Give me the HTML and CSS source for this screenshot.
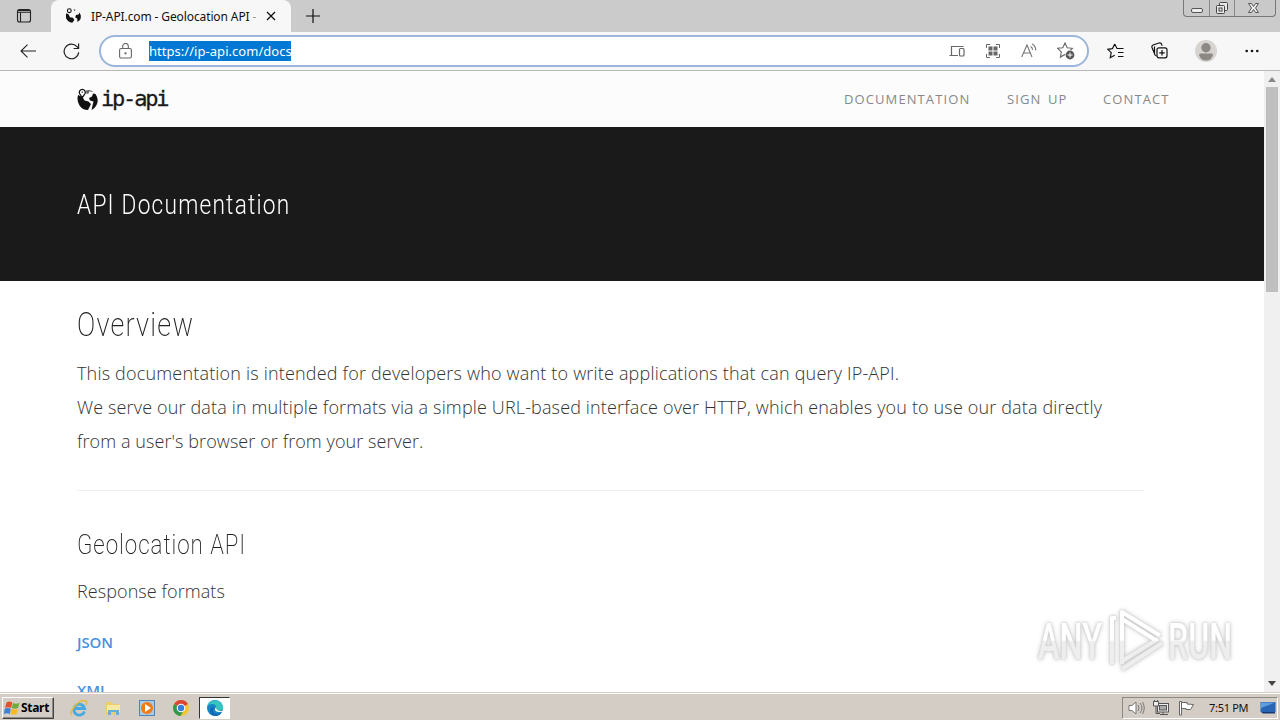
FILE: index.html
```html
<!DOCTYPE html>
<html lang="en">
<head>
<meta charset="utf-8">
<title>IP-API.com - Geolocation API</title>
<link rel="stylesheet" href="styles.css">
</head>
<body>
<div class="tabs">
  <svg class="workspaces" viewBox="0 0 16 16" fill="none" stroke="#222" stroke-width="1.1"><rect x="1.500" y="1.500" width="13" height="12.500" rx="2"/><path d="M2 2.500h12M1.500 4.300h13M4.500 4.500v9.500"/></svg>
  <div class="tab">
    <svg class="favicon" viewBox="0 0 17 16" fill="#111"><circle cx="4.300" cy="2.700" r="1.900" fill="none" stroke="#111" stroke-width="1.100"/><path d="M1 5.200l2.500 1L5 9.300l3 .5 1.300 2.200-2 2.800Q2.500 14 1 10zM8.500 1.500l2 .3-1 1.200zM11 7l2.500-.5 1-2 1.300 3q.5 4.500-3.300 6.500l-.3-3.500-2-1z"/></svg>
    <span class="tab-title">IP-API.com - Geolocation API <span class="fade">-</span></span>
    <svg class="close" viewBox="0 0 10 10"><path d="M1 1l8 8M9 1l-8 8" stroke="#111" stroke-width="1.300"/></svg>
  </div>
  <svg class="plus" viewBox="0 0 14 14"><path d="M7 0v14M0 7h14" stroke="#111" stroke-width="1.200"/></svg>
  <div class="window">
    <svg width="25" height="16"><rect x="7.500" y="8.500" width="11" height="4" rx="1.500" fill="#eee" stroke="#555"/></svg>
    <svg width="25" height="16" fill="#e8e8e8" stroke="#444"><rect x="9.500" y="2.500" width="8" height="8" rx="1"/><rect x="6.500" y="5.500" width="8" height="8" rx="1"/><rect x="9" y="8" width="3" height="3"/></svg>
    <svg width="41" height="16"><path d="M13.500 3.500h3l2 3 2-3h3l-3 4.500 3 4.500h-3l-2-3-2 3h-3l3-4.500z" fill="#eee" stroke="#555"/></svg>
  </div>
</div>
<div class="toolbar">
  <svg class="back" viewBox="0 0 16 14" fill="none" stroke="#222" stroke-width="1.100"><path d="M16 7H1M7.500 .6L1 7l6.500 6.400"/></svg>
  <svg class="reload" viewBox="0 0 17 17" fill="none" stroke="#222" stroke-width="1.200"><path d="M15.700 9.200a7.300 7.300 0 1 1-1.700-5.500l1.500 1.700M15.600 .5v5h-5"/></svg>
  <div class="address">
    <svg class="lock" viewBox="0 0 13 16" fill="none" stroke="#666" stroke-width="1.100"><rect x=".6" y="5.500" width="11.800" height="9.500" rx="1.500"/><path d="M3.700 5.500V3.300a2.800 2.800 0 0 1 5.600 0v2.200"/><circle cx="6.500" cy="10.300" r=".6" fill="#555"/></svg>
    <span class="url">https://ip-api.com/docs</span>
    <div class="actions">
      <svg width="16" height="16" viewBox="0 0 16 16" fill="none" stroke="#666" stroke-width="1.200"><path d="M2.500 12V3.500h12M.5 12.500h8.500"/><rect x="10.500" y="5.500" width="4.500" height="7.500" rx="1"/></svg>
      <svg width="16" height="16" viewBox="0 0 16 16" fill="#666" stroke="#666"><path d="M1.500 5V1.500H5M11 1.500h3.500V5M14.500 11v3.500H11M5 14.500H1.500V11" fill="none"/><rect x="4" y="4" width="3" height="3"/><rect x="9" y="4" width="3" height="3"/><rect x="4" y="9" width="3" height="3"/><rect x="9" y="9" width="3" height="3"/></svg>
      <svg width="16" height="16" viewBox="0 0 16 16" fill="none" stroke="#777" stroke-width="1.100"><path d="M.7 14L6 2l5 12M2.600 10h6.700M9.500 3.500q2.200 1 2 3.500M11 1q4 2 3.700 6.500"/></svg>
      <svg width="18" height="18" viewBox="0 0 18 18"><path d="M8 1l2.200 4.700 5.200.6-3.900 3.600 1 5L8 12.500l-4.600 2.600.9-5.200L.6 6.300l5.200-.6z" fill="none" stroke="#666" stroke-width="1.100"/><circle cx="13" cy="13" r="5" fill="#fff"/><circle cx="13" cy="13" r="4.400" fill="#555"/><path d="M13 10.500v5M10.500 13h5" stroke="#fff"/></svg>
    </div>
  </div>
  <div class="tools">
    <svg width="18" height="16" viewBox="0 0 18 16" fill="none" stroke="#111" stroke-width="1.200"><path d="M7.700 1L5.400 5.700.8 6.300l3.400 3.400-.9 5 4.400-2.500M7.700 1L10 5.500h6.500M11 9.500h5.500M11 13.500h5.500"/></svg>
    <svg width="18" height="18" viewBox="0 0 18 18" fill="none" stroke="#111" stroke-width="1.200"><path d="M3.500 11.500l-2.500-6Q.5 3.700 2 3l6-2q2-.5 2.700 1.500l.5 1.300M3.500 4.500v7.500q.3 1.500 2 2"/><rect x="6" y="5.800" width="10" height="10" rx="2"/><path d="M11 8.100v5.400M8.300 10.800h5.400"/></svg>
    <svg width="22" height="22" viewBox="0 0 22 22"><circle cx="11" cy="11" r="11" fill="#d6d3d0"/><circle cx="11" cy="7.700" r="4.700" fill="#8c8884"/><path d="M4 15q0-1.500 1.500-1.500h11Q18 13.500 18 15q-1.500 5.500-7 5.500T4 15z" fill="#8c8884"/></svg>
    <svg width="14" height="4" fill="#111"><circle cx="1.700" cy="2" r="1.300"/><circle cx="7" cy="2" r="1.300"/><circle cx="12.300" cy="2" r="1.300"/></svg>
  </div>
</div>
<div class="viewport">
  <div class="page">
    <div class="nav">
      <div class="brand"><svg class="brand-icon" viewBox="0 0 21 23"><path d="M1 7q-1.500 6 1.500 10.500Q5.500 22 11 22l1.500-3 1.500-3-2.500-2.500-4-1L5.500 9zM12 10l3-1.500 1-3 2.500.5Q22 11 20 16q-2 4.500-5.500 6l1-4.500 1-4-3.500-1z"/><path d="M9 2.500q3.500-1.500 7 1l-1.500.5-2-1-1 2.500-2 .5z" opacity=".65"/><path d="M5.300 9.500L2.500 5.500A3 3 0 1 1 8.100 5.500z" fill="#fff" stroke="#111" stroke-width="1.300"/><circle cx="5.300" cy="4.200" r=".9" fill="#777"/></svg><span class="brand-name">ip-api</span></div>
      <div class="links"><span class="l1">DOCUMENTATION</span><span class="l2">SIGN UP</span><span class="l3">CONTACT</span></div>
    </div>
    <div class="hero"><h1>API Documentation</h1></div>
    <div class="content">
      <h2>Overview</h2>
      <p><span class="p1">This documentation is intended for developers who want to write applications that can query IP-API.</span><br><span class="p2">We serve our data in multiple formats via a simple URL-based interface over HTTP, which enables you to use our data directly</span><br><span class="p3">from a user's browser or from your server.</span></p>
      <hr>
      <h3>Geolocation API</h3>
      <div class="formats">Response formats</div>
      <a>JSON</a>
      <a>XML</a>
    </div>
    <svg class="watermark" viewBox="0 0 210 80">
      <defs><linearGradient id="shade" x1="0" y1="0" x2="0" y2="80" gradientUnits="userSpaceOnUse"><stop offset=".5" stop-color="#fff"/><stop offset=".52" stop-color="#eee"/></linearGradient></defs>
      <g fill="url(#shade)" font-family="Roboto" font-size="50" font-weight="500">
        <text x="8" y="59" textLength="64" lengthAdjust="spacingAndGlyphs">ANY</text>
        <text x="138" y="59" textLength="64" lengthAdjust="spacingAndGlyphs">RUN</text>
      </g>
      <g fill="none" stroke="url(#shade)" stroke-width="4" stroke-linejoin="round"><path d="M92 64V12l38 23.500M86 18h-4v46M92 19l35 22M92 61l36-22M92 69l40-26"/></g>
    </svg>
  </div>
  <div class="scrollbar"><i class="up"></i><div class="thumb"></div><i class="down"></i></div>
</div>
<div class="taskbar">
  <div class="start"><svg width="16" height="16" viewBox="0 0 16 16"><path d="M2.500 2.500Q5.500.5 8.300 2.500L7 8Q4 6.500 1 8z" fill="#e3532b"/><path d="M9 3q3 1.500 6.500-.3L14 8q-3 1.500-6.300 0z" fill="#6cae3b"/><path d="M.8 8.700q3-1.500 6 0l-1 5.300q-3-1.500-6 0z" fill="#3d83d0"/><path d="M7.500 8.700q3 1.500 6.300 0l-1 5.300q-3 1.500-6.300 0z" fill="#f4ba28"/></svg><span>Start</span></div>
  <div class="apps">
    <svg width="18" height="18" viewBox="0 0 18 18" fill="none"><path d="M14.500 12.500A5.500 5.500 0 1 1 14.700 9.500H5" stroke="#47a9df" stroke-width="2.800"/><path d="M2 16Q-1 14 5 7t10-5q3 0 1 4" stroke="#e4bd3b" stroke-width="1.500"/></svg>
    <svg width="18" height="18" viewBox="0 0 18 18"><path d="M2 3h6l1 2h6v11H2z" fill="#edcd67"/><path d="M3 6h13v7H3z" fill="#f8e8a6"/><path d="M4 16v-5h11v5h-3v-3H7v3z" fill="#64b1d5"/></svg>
    <svg width="18" height="18" viewBox="0 0 18 18"><rect x="1.500" y="1.500" width="15" height="15" fill="#a8cbe6" stroke="#4d84b9"/><circle cx="9" cy="9" r="6" fill="#f27a15"/><path d="M7 5l6 4-6 4z" fill="#fff"/></svg>
    <svg width="18" height="18" viewBox="0 0 18 18"><circle cx="9" cy="9" r="8" fill="#f4c52c"/><path d="M9 9L2.100 5A8 8 0 0 1 16 5z" fill="#db4537"/><path d="M9 9L2.100 5A8 8 0 0 0 8.500 17l3.500-6z" fill="#36964e"/><circle cx="9" cy="9" r="4.300" fill="#fff"/><circle cx="9" cy="9" r="3.200" fill="#347ee0"/></svg>
  </div>
  <div class="active"><svg width="18" height="18" viewBox="0 0 18 18"><circle cx="9" cy="9" r="8" fill="#1785c8"/><path d="M1.500 7A8 8 0 0 1 17 8q0 4-5 4-3 0-2-2 1-5-4-5-3 0-4.500 2z" fill="#36c4c0"/><path d="M8 8q-3 6 3 7 3 0 5-2-2 4-7 4Q4 16 4 11q1-3 4-3z" fill="#1267b3"/><path d="M10 8q-3 4.500 3 5h5v-1.500q-4 1.500-7-.5-1-1-1-3z" fill="#fff"/></svg></div>
  <div class="tray">
    <svg width="17" height="16" viewBox="0 0 17 16" fill="#fff" stroke="#777"><path d="M1 5.500h3L8 2v12l-4-3.500H1z"/><path d="M10 5q2 3 0 6M12 3q4 5 0 10M14.500 2q3.500 6 0 12" fill="none"/></svg>
    <svg width="17" height="16" viewBox="0 0 17 16" fill="#eee" stroke="#555"><rect x="4.500" y="3.500" width="11" height="8.500"/><rect x="6.500" y="5.500" width="7" height="4.500" fill="#aaa"/><path d="M7 14.500h8M10 12v2.500M3 6v7.500h4" fill="none"/><path d="M.5 1.500h5V6h-5zM1.500 0v1.500M4.500 0v1.500"/></svg>
    <svg width="17" height="16" viewBox="0 0 17 16" fill="#fff" stroke="#666"><path d="M1.500 1.500h2V15h-2zM3.500 2.500H9V4l6.500.5-3 5H8v-1H3.500z"/></svg>
    <span class="time">7:51 PM</span>
    <svg width="16" height="15" viewBox="0 0 16 15"><rect x=".5" y="2" width="15" height="10" fill="#2866b5"/><path d="M1 2.500h14L1 8z" fill="#619ddd"/><path d="M1 12h14v1.500H3z" fill="#173a73"/></svg>
  </div>
</div>
</body>
</html>
```
FILE: styles.css
```css
* { box-sizing: border-box; }
body { margin: 0; width: 1280px; height: 720px; overflow: hidden; display: flex; flex-direction: column; font-family: "Noto Sans", sans-serif; background: #fff; }
svg { display: block; flex: none; }
.tabs { height: 32px; flex: none; display: flex; background: #cbcbcb; }
.workspaces { width: 16px; height: 16px; margin: 8px 0 0 16px; }
.tab { width: 240px; height: 32px; margin-left: 19px; padding-left: 14px; display: flex; align-items: center; background: #f7f7f7; border-radius: 8px 8px 0 0; }
.favicon { width: 17px; height: 16px; }
.tab-title { width: 167px; margin-left: 9px; font-size: 12px; letter-spacing: -.11px; color: #111; white-space: nowrap; }
.fade { color: #999; }
.close { width: 10px; height: 10px; margin-left: 8px; }
.plus { width: 14px; height: 14px; margin: 9px 0 0 15px; }
.window { display: flex; height: 17px; margin: 0 4px 0 auto; border: 1px solid #777; border-top: 0; border-radius: 0 0 4px 4px; background: #c9c9c9; }
.window svg + svg { border-left: 1px solid #888; }
.toolbar { height: 39px; flex: none; display: flex; align-items: center; background: #f7f7f7; border-bottom: 1px solid #b8b8b8; }
.back { width: 16px; height: 14px; margin-left: 20px; }
.reload { width: 17px; height: 17px; margin-left: 27px; }
.address { width: 990px; height: 32px; margin-left: 19px; padding: 0 12px 0 18px; display: flex; align-items: center; background: #fff; border: 2px solid #9bb5dd; border-radius: 16px; }
.lock { width: 13px; height: 16px; }
.url { width: 142px; height: 20px; margin-left: 17px; background: #0078d4; color: #fff; font-size: 13px; line-height: 20px; letter-spacing: .04px; white-space: nowrap; }
.actions { display: flex; align-items: center; gap: 20px; margin-left: auto; }
.tools { display: flex; align-items: center; gap: 26px; margin-left: 18px; }
.tools svg:nth-child(4) { margin-left: 2px; }
.viewport { height: 621px; flex: none; display: flex; }
.page { width: 1264px; height: 621px; overflow: hidden; position: relative; }
.nav { height: 56px; padding-left: 77px; display: flex; justify-content: space-between; align-items: center; background: #fcfcfc; }
.brand { display: flex; align-items: center; fill: #111; }
.brand-icon { width: 21px; height: 23px; }
.brand-name { margin-left: 3px; font: 22px/26px "DejaVu Sans Mono", monospace; letter-spacing: -2.2px; color: #1a1a1a; -webkit-text-stroke: .3px #1a1a1a; }
.links { display: flex; gap: 36px; margin-right: 95px; font: 500 13px/20px "Open Sans", sans-serif; color: #888; white-space: nowrap; }
.links span { letter-spacing: 1.1px; }
.l1 { width: 127px; } .l2 { width: 60px; word-spacing: 2px; } .l3 { width: 66px; }
.hero { height: 154px; padding: 58px 0 0 77px; background: #1a1a1a; }
h1, h2, h3 { margin: 0; width: max-content; font-family: Roboto, sans-serif; transform-origin: left; white-space: nowrap; }
h1 { font-size: 28px; line-height: 40px; font-weight: 350; letter-spacing: 1.5px; transform: scaleX(.81); color: #fff; }
.content { padding: 22px 0 0 77px; color: #222; }
h2 { font-size: 34px; line-height: 42px; font-weight: 200; letter-spacing: 1.5px; transform: scaleX(.8); }
p { margin: 11px 0 0; font: 300 18px/34px "Open Sans", sans-serif; color: #333; white-space: nowrap; }
.p1 { letter-spacing: .182px; }
.p2 { letter-spacing: .145px; }
.p3 { letter-spacing: .08px; }
hr { width: 1067px; height: 1px; margin: 32px 0 0; border: 0; background: #f0f0f0; }
h3 { margin-top: 34px; font-size: 28px; line-height: 40px; font-weight: 200; letter-spacing: 1.2px; transform: scaleX(.8); }
.formats { margin-top: 9px; font: 300 18px/34px "Open Sans", sans-serif; letter-spacing: .08px; color: #333; }
a { display: block; margin-top: 22px; font: 600 15px/24px "Open Sans", sans-serif; letter-spacing: -.1px; color: #4a90e2; }
a + a { margin-top: 24px; }
.watermark { position: absolute; left: 1030px; top: 529px; width: 210px; height: 80px; filter: drop-shadow(0 0 1px #ccc) drop-shadow(0 0 2px #ccc); }
.scrollbar { width: 16px; height: 621px; display: flex; flex-direction: column; align-items: center; background: #f0f0f0; }
.up, .down { border: 4px solid transparent; }
.up { margin-top: 2px; border-bottom: 5px solid #888; }
.thumb { width: 12px; height: 205px; margin-top: 5px; background: #bfbfbf; }
.down { margin: auto 0 2px; border-top: 5px solid #444; }
.taskbar { height: 28px; flex: none; display: flex; align-items: center; padding-top: 2px; background: #d4cdc5; border-top: 1px solid #d4cdc5; box-shadow: inset 0 1px #fff; }
.start { width: 52px; height: 22px; margin-left: 2px; padding-left: 1px; display: flex; align-items: center; gap: 1px; border: 1px solid; border-color: #fff #444 #444 #fff; box-shadow: inset -1px -1px #8d8983; }
.start span { font: bold 12px/18px "Noto Sans", sans-serif; letter-spacing: -.3px; color: #000; }
.apps { display: flex; gap: 16px; margin-left: 16px; }
.active { width: 31px; height: 22px; margin-left: 9px; padding: 1px 0 0 6px; background: #fff; border: 1px solid; border-color: #333 #fff #fff #333; }
.tray { width: 156px; height: 22px; margin: 0 2px 0 auto; padding-left: 5px; display: flex; align-items: center; border: 1px solid; border-color: #8d8983 #fff #fff #8d8983; }
.tray svg { margin-right: 8px; }
.tray svg:nth-child(3) { margin-right: 14px; }
.time { width: 51px; font-size: 11px; line-height: 18px; letter-spacing: -.3px; color: #111; white-space: nowrap; }
.tray svg:last-child { margin: 0; }
```
